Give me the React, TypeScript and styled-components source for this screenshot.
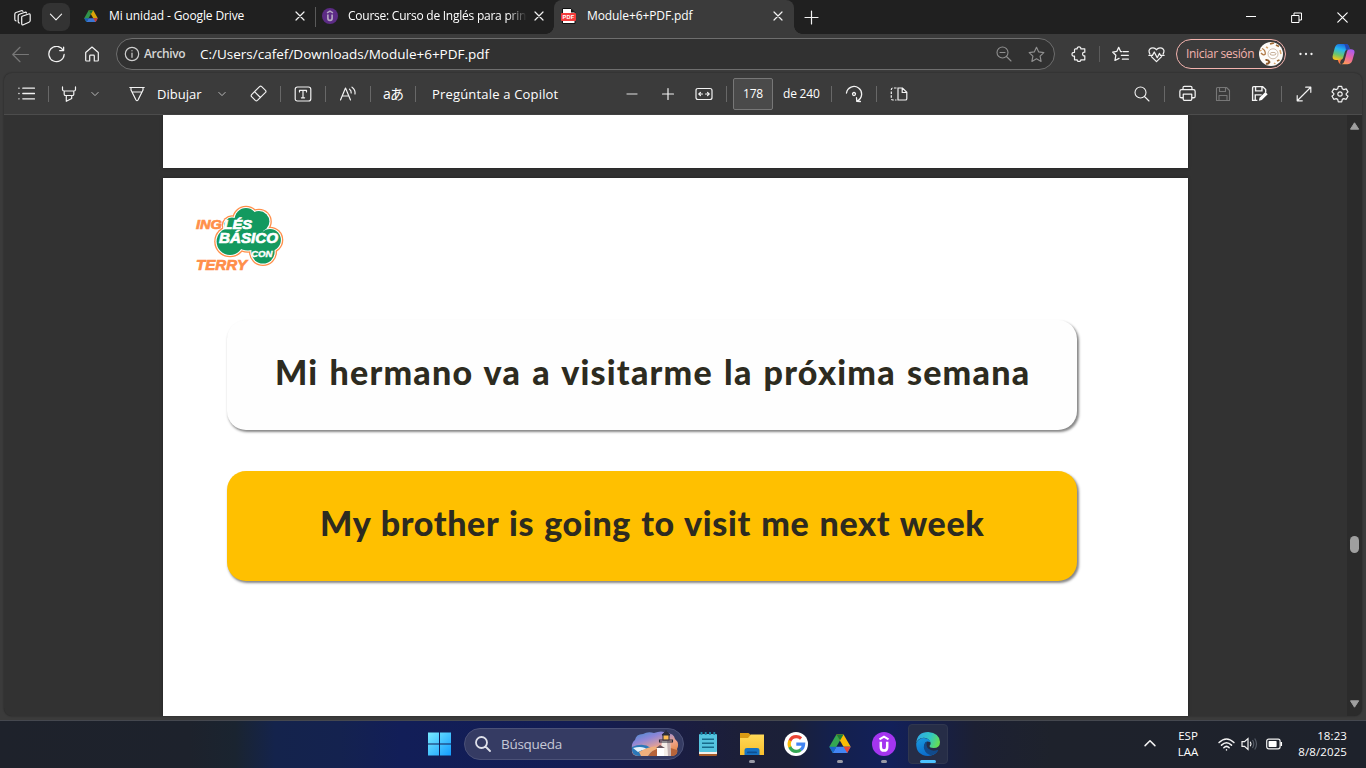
import React from "react";
import styled, { createGlobalStyle } from "styled-components";

const Global = createGlobalStyle`
  * { box-sizing: border-box; }
  html, body { margin: 0; padding: 0; overflow: hidden; }
  body { font-family: "Open Sans", "Noto Sans", "Noto Sans CJK JP", sans-serif; background: #3b3b3b; color: #fff; }
  svg { display: block; flex: none; }
`;

const Desktop = styled.div`
  width: 1366px;
  height: 768px;
  display: flex;
  flex-direction: column;
  background: #3b3b3b;
`;

const TabStrip = styled.div`
  height: 34px;
  background: #202020;
  display: flex;
  align-items: center;
  padding-left: 14px;
`;

const TabActions = styled.button`
  width: 28px;
  height: 28px;
  margin: 0 0 0 11px;
  padding: 0;
  border: 0;
  border-radius: 8px;
  background: #333;
  display: flex;
  align-items: center;
  justify-content: center;
`;

const Tab = styled.div<{ $width: number; $active?: boolean }>`
  position: relative;
  width: ${(p) => p.$width}px;
  height: 34px;
  flex: none;
  display: flex;
  align-items: center;
  padding-bottom: 2px;
  background: ${(p) => (p.$active ? "#3b3b3b" : "transparent")};
  border-radius: 8px 8px 0 0;
  ${(p) =>
    p.$active &&
    `&::before, &::after {
      content: "";
      position: absolute;
      bottom: 0;
      width: 8px;
      height: 8px;
    }
    &::before { left: -8px; background: radial-gradient(circle at 0 0, transparent 7.5px, #3b3b3b 8px); }
    &::after { right: -8px; background: radial-gradient(circle at 100% 0, transparent 7.5px, #3b3b3b 8px); }`}
`;

const Text = styled.span<{ $size?: number; $track?: number; $color?: string; $width?: number; $left?: number; $weight?: number; $fade?: boolean }>`
  flex: none;
  white-space: nowrap;
  font-size: ${(p) => p.$size ?? 13}px;
  line-height: 18px;
  letter-spacing: ${(p) => p.$track ?? 0}px;
  color: ${(p) => p.$color ?? "#fff"};
  width: ${(p) => (p.$width ? `${p.$width}px` : "auto")};
  margin-left: ${(p) => p.$left ?? 0}px;
  font-weight: ${(p) => p.$weight ?? 400};
  ${(p) => p.$fade && "-webkit-mask-image: linear-gradient(90deg, #000 calc(100% - 20px), transparent);"}
`;

const IconCell = styled.span<{ $left?: number; $size?: number }>`
  width: ${(p) => p.$size ?? 18}px;
  height: ${(p) => p.$size ?? 18}px;
  margin-left: ${(p) => p.$left ?? 0}px;
  flex: none;
  display: flex;
  align-items: center;
  justify-content: center;
`;

const Rule = styled.span<{ $left?: number; $height?: number; $color?: string }>`
  width: 1px;
  flex: none;
  height: ${(p) => p.$height ?? 16}px;
  margin-left: ${(p) => p.$left ?? 0}px;
  background: ${(p) => p.$color ?? "#686868"};
`;

const AddressRow = styled.div`
  height: 39px;
  display: flex;
  align-items: center;
  padding: 1px 0 0 11px;
`;

const Omnibox = styled.div`
  width: 939px;
  height: 32px;
  margin-left: 15px;
  flex: none;
  display: flex;
  align-items: center;
  padding-left: 7px;
  border: 1px solid #6e6e6e;
  border-radius: 16px;
  background: #313131;
`;

const Profile = styled.div`
  width: 110px;
  height: 30px;
  margin-left: 11px;
  flex: none;
  display: flex;
  align-items: center;
  padding-left: 9px;
  border: 1px solid #f3b3ae;
  border-radius: 15px;
`;

const Viewer = styled.div`
  width: 1358px;
  height: 643px;
  margin-left: 4px;
  flex: none;
  border-radius: 8px;
  overflow: hidden;
  display: flex;
  flex-direction: column;
  background: #323232;
  box-shadow: 0 0 2px rgba(0, 0, 0, 0.45);
`;

const PdfToolbar = styled.div`
  height: 42px;
  flex: none;
  display: flex;
  align-items: center;
  padding-left: 13px;
  background: #3b3b3b;
  border-bottom: 1px solid #4c4c4c;
`;

const PageInput = styled.div`
  width: 40px;
  height: 32px;
  margin-left: 6px;
  flex: none;
  display: flex;
  align-items: center;
  justify-content: center;
  border: 1px solid #777;
  border-radius: 2px;
  background: #4a4a4a;
`;

const Stage = styled.div`
  height: 601px;
  display: flex;
  justify-content: space-between;
  padding-left: 159px;
`;

const Pages = styled.div`
  width: 1025px;
  display: flex;
  flex-direction: column;
  gap: 10px;
`;

const PreviousPage = styled.div`
  height: 53px;
  flex: none;
  background: #fff;
  box-shadow: 0 0 3px rgba(0, 0, 0, 0.35);
`;

const Slide = styled.div`
  height: 538px;
  flex: none;
  background: #fff;
  padding: 22px 0 0 27px;
  box-shadow: 0 0 3px rgba(0, 0, 0, 0.35);
`;

const Phrase = styled.div<{ $bg: string; $top: number; $track: number; $word: number; $shift: number }>`
  width: 850px;
  height: 110px;
  margin: ${(p) => p.$top}px 0 0 37.4px;
  padding: 0 0 7px ${(p) => p.$shift}px;
  display: flex;
  align-items: center;
  border-radius: 19px;
  background: ${(p) => p.$bg};
  box-shadow: 1.5px 2px 2.5px rgba(0, 0, 0, 0.48);
  color: #2d2b20;
  font-family: Lato, "Open Sans", sans-serif;
  font-weight: 900;
  font-size: 34px;
  white-space: nowrap;
  letter-spacing: ${(p) => p.$track}px;
  word-spacing: ${(p) => p.$word}px;
`;

const Scrollbar = styled.div`
  width: 15px;
  display: flex;
  flex-direction: column;
  align-items: center;
  background: #2b2b2b;
  padding: 7px 0 8px;
`;

const Thumb = styled.div`
  width: 9px;
  height: 17px;
  margin-top: 406px;
  margin-bottom: auto;
  border-radius: 5px;
  background: #9f9f9f;
`;

const Taskbar = styled.div`
  height: 48px;
  margin-top: 4px;
  flex: none;
  display: flex;
  align-items: center;
  border-top: 1px solid #45484f;
  padding: 0 0 1px 427px;
  background: linear-gradient(90deg, #1e222b 0, #1d222c 190px, #1a2430 235px, #14234c 275px, #14224f 340px, #121e58 400px, #131d54 580px, #1a1d42 680px, #1c1f38 740px, #1b2038 790px, #14204c 830px, #12205a 890px, #151f4c 925px, #1c2033 975px, #1e222c 1050px, #1e222b 100%);
`;

const Search = styled.div`
  width: 220px;
  height: 32px;
  margin-left: 13px;
  flex: none;
  display: flex;
  align-items: center;
  padding-left: 10px;
  border: 1px solid #4b5177;
  border-radius: 16px;
  background: #353b63;
`;

const TaskButton = styled.div<{ $active?: boolean; $mark?: boolean }>`
  position: relative;
  width: 40px;
  height: 40px;
  margin-left: 4px;
  flex: none;
  display: flex;
  align-items: center;
  justify-content: center;
  border-radius: 4px;
  border: 1px solid ${(p) => (p.$active ? "#30374f" : "transparent")};
  background: ${(p) => (p.$active ? "#262d47" : "transparent")};
  &::after {
    content: "";
    display: ${(p) => (p.$mark ? "block" : "none")};
    position: absolute;
    bottom: 0;
    width: ${(p) => (p.$active ? 16 : 6)}px;
    height: 3px;
    border-radius: 2px;
    background: ${(p) => (p.$active ? "#4cc2ff" : "#989aa6")};
  }
`;

const Stack = styled.div<{ $left: number; $width: number; $align: string; $track?: number }>`
  display: flex;
  flex-direction: column;
  flex: none;
  margin-left: ${(p) => p.$left}px;
  width: ${(p) => p.$width}px;
  align-items: ${(p) => p.$align};
  font-size: 11.5px;
  line-height: 16px;
  letter-spacing: ${(p) => p.$track ?? 0}px;
  white-space: nowrap;
`;

type LineProps = { d: string; size?: number; box?: number; color?: string; stroke?: number; fill?: string };

const Line = ({ d, size = 16, box = 16, color = "#f2f2f2", stroke = 1.1, fill = "none" }: LineProps) => (
  <svg width={size} height={size} viewBox={`0 0 ${box} ${box}`} fill={fill} stroke={color} strokeWidth={stroke} strokeLinecap="round" strokeLinejoin="round">
    <path d={d} />
  </svg>
);

const CLOSE = "M1 1L9 9M9 1L1 9";
const CHEVRON = "M1 3L5 7L9 3";
const STAR = "M8 1.2L10.1 5.6L14.9 6.2L11.4 9.6L12.3 14.5L8 12.1L3.7 14.5L4.6 9.6L1.1 6.2L5.9 5.6Z";

const DriveIcon = ({ size, dim }: { size: number; dim?: boolean }) => (
  <svg width={size} height={size * 0.9} viewBox="0 0 22 20" opacity={dim ? 0.85 : 1}>
    <path d="M7.3 0.5L0.2 13L3.7 19.3L11 6.5Z" fill="#34a853" />
    <path d="M7.3 0.5H14.6L21.8 13H14.6Z" fill="#fbbc04" />
    <path d="M7.3 0.5H14.6L11 6.5Z" fill="#188038" />
    <path d="M7.3 13H21.8L18.3 19.3H3.7Z" fill="#4285f4" />
    <path d="M0.2 13H7.3L3.7 19.3Z" fill="#1967d2" />
    <path d="M14.6 13H21.8L18.3 19.3Z" fill="#ea4335" />
  </svg>
);

const UdemyIcon = ({ size, bg, fg }: { size: number; bg: string; fg: string }) => (
  <svg width={size} height={size} viewBox="0 0 24 24">
    <circle cx="12" cy="12" r="12" fill={bg} />
    <path d="M7.5 7.3L12 4.7L16.5 7.3" fill="none" stroke={fg} strokeWidth="2.1" />
    <path d="M8.8 9.8V14.9Q8.8 18.6 12 18.6Q15.2 18.6 15.2 14.9V9.8" fill="none" stroke={fg} strokeWidth="2.5" />
  </svg>
);

const PdfIcon = () => (
  <svg width="16" height="16" viewBox="0 0 16 16">
    <path d="M1.5 .5H10L14 4.5V15.5H1.5Z" fill="#fff" stroke="#111" />
    <path d="M10 .5V4.5H14" fill="#111" />
    <rect x="0" y="5" width="15" height="8" rx="1" fill="#f43b3b" />
    <text x="1.6" y="11.1" fontFamily="Liberation Sans" fontWeight="700" fontSize="5.6" fill="#fff" textLength="11.6">PDF</text>
  </svg>
);

const CopilotIcon = () => (
  <svg width="23" height="22" viewBox="0 0 23 22">
    <defs>
      <linearGradient id="cpA" x1="0.6" y1="0" x2="0.3" y2="1">
        <stop offset="0" stopColor="#1b68dc" /><stop offset="0.35" stopColor="#25b7f2" /><stop offset="0.7" stopColor="#6cc66b" /><stop offset="1" stopColor="#f4c51c" />
      </linearGradient>
      <linearGradient id="cpB" x1="0.7" y1="0" x2="0.3" y2="1">
        <stop offset="0" stopColor="#a65bf3" /><stop offset="0.5" stopColor="#e963a4" /><stop offset="1" stopColor="#ff9b56" />
      </linearGradient>
    </defs>
    <path d="M16.5 6.2H19Q23.4 6.2 22.3 10.5L20.3 17.5Q19 21.3 15.3 21.3H9.7Q11.8 20.8 12.6 17.6L14.7 9.5Q15.3 6.9 16.5 6.2Z" fill="url(#cpB)" />
    <path d="M7 1H14.3Q16.3 1 17 3.6L17.7 6.2H16.6Q13.7 6.2 12.8 9L11 15.2Q10.2 17 7.8 16.9H4Q-.3 16.9 .8 12.3L2.8 4.8Q3.9 1 7 1Z" fill="url(#cpA)" />
    <path d="M6.8 16.9Q8.8 16.8 9.6 15L8.1 19.5Q7.7 21.3 9.7 21.3Q7.1 21.3 6.2 18.2L5.8 16.9Z" fill="#fb7b45" />
    <path d="M12 1H14.3Q16.3 1 17 3.6L17.7 6.2H16.6Q15 6.2 14 7.2L13.4 4Q13 1.7 12 1Z" fill="#2348b5" />
  </svg>
);

const Avatar = () => (
  <svg width="24" height="24" viewBox="0 0 24 24">
    <defs><clipPath id="av"><circle cx="12" cy="12" r="12" /></clipPath></defs>
    <g clipPath="url(#av)">
      <rect width="24" height="24" fill="#fdfbf8" />
      <g fill="none" stroke="#b07a48" strokeWidth="1.3">
        <path d="M3 6.5Q6.5 8 6.3 12Q4.5 14 2 11" /><path d="M6.5 18Q9.5 17.5 10.5 20Q9 22.5 7 21.5" stroke="#8e5a2c" strokeWidth="2" />
        <path d="M11 2L15 0.8M17 3L20 4.5M18 19L20.5 18" stroke="#a06a35" strokeWidth="1.8" />
        <path d="M7 5L9 6M1 9L2.5 8M15 21L16.5 22M21 8L22 12" stroke="#d9a56c" strokeWidth="1.5" />
      </g>
      <circle cx="14" cy="11.8" r="5" fill="#fff" stroke="#cdbbaa" strokeWidth="1" />
      <ellipse cx="14" cy="11.8" rx="3" ry="1.4" fill="none" stroke="#b99c80" strokeWidth=".8" />
    </g>
  </svg>
);

const Clover = ({ grow, fill }: { grow: number; fill: string }) => (
  <g fill={fill}>
    <circle cx="246" cy="219.5" r={11 + grow} />
    <circle cx="259" cy="221.5" r={10 + grow} />
    <circle cx="230" cy="241.5" r={13 + grow} />
    <circle cx="232" cy="225.5" r={7.5 + grow} />
    <circle cx="270" cy="240" r={10.5 + grow} />
    <circle cx="263" cy="252" r={11.2 + grow} />
    <circle cx="248" cy="235" r={15 + grow} />
  </g>
);

const BrandLogo = () => (
  <svg width="96" height="76" viewBox="190 200 96 76">
    <Clover grow={2.8} fill="#ff8f4a" />
    <Clover grow={1.5} fill="#fff" />
    <Clover grow={0.4} fill="#13995f" />
    <g fontFamily="Liberation Sans" fontStyle="italic" fontWeight="700" strokeWidth=".7">
      <text x="196" y="228.7" fontSize="13.5" fill="#ff8f4a" stroke="#ff8f4a" textLength="26" lengthAdjust="spacingAndGlyphs">ING</text>
      <text x="223.5" y="228.7" fontSize="13.5" fill="#fff" stroke="#fff" textLength="28.5" lengthAdjust="spacingAndGlyphs">LÉS</text>
      <text x="219" y="243.3" fontSize="14.3" fill="#fff" stroke="#fff" textLength="59" lengthAdjust="spacingAndGlyphs">BÁSICO</text>
      <text x="251" y="257.3" fontSize="9.6" fill="#fff" stroke="#fff" strokeWidth=".4" textLength="21.5" lengthAdjust="spacingAndGlyphs">CON</text>
      <text x="196" y="270" fontSize="14" fill="#ff8f4a" stroke="#ff8f4a" textLength="51" lengthAdjust="spacingAndGlyphs">TERRY</text>
    </g>
  </svg>
);

const Lighthouse = () => (
  <svg width="48" height="28" viewBox="0 0 48 28">
    <defs>
      <linearGradient id="sky" x1="0" y1="0" x2="0.7" y2="1">
        <stop offset="0" stopColor="#3a8ed0" /><stop offset=".35" stopColor="#8f86d8" /><stop offset=".7" stopColor="#f0a58c" /><stop offset="1" stopColor="#e88842" />
      </linearGradient>
    </defs>
    <path d="M4 10Q5 4 12 4Q17 1 23 3Q31 0 35 3Q43 3 44 9Q49 13 46 19Q48 25 40 26H8Q0 26 1 19Q0 13 4 10Z" fill="url(#sky)" />
    <path d="M1 17Q12 12 20 18Q25 22 21 26H8Q0 26 1 17Z" fill="#2c78b8" />
    <path d="M2 18Q12 15 17 20Q12 19 7 22Z" fill="#e6f3fb" />
    <path d="M17 26Q22 18 33 16L46 20Q47 26 40 26Z" fill="#b7643a" />
    <path d="M8 22Q20 15 31 17Q20 20 17 26H10Z" fill="#f0b07d" />
    <g transform="translate(-2 0)">
      <path d="M33 11H41L42 26H31Z" fill="#f5efe9" /><path d="M38 11H41L42 26H39Z" fill="#c4b3b4" />
      <rect x="28" y="18" width="7" height="8" fill="#fff" /><path d="M27 18L31 15L36 18Z" fill="#68545d" />
      <path d="M30 12H44M30.5 9.5V12M43.5 9.5V12M30 10H44" stroke="#2b2c3b" strokeWidth="1.1" />
      <rect x="34" y="4.5" width="6" height="5.5" fill="#ffbd52" stroke="#2b2c3b" /><path d="M33 5Q37 -1 41 5ZM37 2V0" fill="#2b2c3b" stroke="#2b2c3b" />
    </g>
  </svg>
);

const EdgeIcon = () => (
  <svg width="24" height="24" viewBox="0 0 24 24">
    <defs>
      <linearGradient id="eTop" x1="0" y1=".3" x2="1" y2=".6"><stop offset="0" stopColor="#2fa9e8" /><stop offset=".55" stopColor="#31c7c3" /><stop offset="1" stopColor="#68e04d" /></linearGradient>
      <linearGradient id="eLow" x1="0" y1="0" x2=".4" y2="1"><stop offset="0" stopColor="#199be0" /><stop offset="1" stopColor="#0b6ccc" /></linearGradient>
    </defs>
    <path d="M.2 11Q1.2 0 12.2 0Q23.4 .8 24 10Q24 16 17.5 16Q13.3 16 13.6 13.8Q15.6 11.7 13.8 9Q10.5 4.7 4.8 6.3Q1.5 7.5 .2 11Z" fill="url(#eTop)" />
    <path d="M.2 11.5Q2.4 6 8 6Q13.5 6.5 14.4 10.2Q9.2 7.6 8.2 13.4Q8 19 14.8 20.5Q18.8 20.8 22 18.6Q18.8 24 12 24Q0 23.2 .2 11.5Z" fill="url(#eLow)" />
    <path d="M9.8 10Q6 14.8 9.4 19.7Q12 23.1 16.4 23.1Q20 22 22.2 18.3Q22.7 17.2 21.3 17.9Q16.3 20 12.2 16.6Q9.7 14.2 11 10.1Z" fill="#114a8b" />
  </svg>
);

const GoogleIcon = () => (
  <svg width="24" height="24" viewBox="0 0 24 24">
    <circle cx="12" cy="12" r="12" fill="#fff" />
    <g fill="none" strokeWidth="3.2">
      <path d="M5.8 9Q7.6 4.6 12.2 4.6Q15 4.6 17.1 6.5" stroke="#ea4335" />
      <path d="M6 8.6Q4.3 12 6 15.4" stroke="#fbbc04" />
      <path d="M5.8 15Q7.8 19.4 12.2 19.4Q14.9 19.4 16.9 17.6" stroke="#34a853" />
      <path d="M12.3 12.2H19.6Q19.4 15.8 16.7 17.8" stroke="#4285f4" />
    </g>
  </svg>
);

const NotepadIcon = () => (
  <svg width="18" height="24" viewBox="0 0 18 24">
    <rect y="20" width="18" height="4" rx="1" fill="#a65b28" /><rect y="18" width="18" height="4" fill="#f3eee8" />
    <rect y="2" width="18" height="18" rx="1" fill="#55c4df" />
    <path d="M2.5 0V3M6.7 0V3M11 0V3M15.3 0V3" stroke="#1c88a8" strokeWidth="1.8" />
    <path d="M3 7.3H15M3 11.3H15M3 15.3H15" stroke="#176b8b" strokeWidth="1.6" />
  </svg>
);

const FolderIcon = () => (
  <svg width="24" height="22" viewBox="0 0 24 22">
    <defs><linearGradient id="fo" x1="0" y1="0" x2="0" y2="1"><stop offset="0" stopColor="#ffd958" /><stop offset="1" stopColor="#f9bf2d" /></linearGradient></defs>
    <path d="M0 0H8.5L11 2V8H0Z" fill="#d99a13" /><path d="M0 5H8L11 1.5H24V22H0Z" fill="url(#fo)" />
    <path d="M4.5 22V17Q4.5 15 7 15H17Q19.5 15 19.5 17V22Z" fill="#1673c4" /><rect x="7" y="18.5" width="10" height="1.8" rx=".9" fill="#0d4f92" />
  </svg>
);

const SaveGlyph = "M2.5 1.5H11.5L14.5 4.5V14.5H1.5V2.5Q1.5 1.5 2.5 1.5ZM4.5 1.5V5.5H10.5V1.5M4 14.5V9.5H12V14.5";

export default function App() {
  return (
    <Desktop>
      <Global />
      <TabStrip>
        <IconCell $size={17}>
          <svg width="17" height="17" viewBox="0 0 17 17" fill="none" stroke="#f2f2f2" strokeWidth="1.2" strokeLinejoin="round" strokeLinecap="round">
            <path d="M8.2 7.2L14.6 5Q16.2 4.6 16.2 6.2V11.5Q16.2 12.7 15 13.2L9.3 15.7Q7.7 16.3 7.7 14.6V8.2Q7.7 7.4 8.2 7.2Z" />
            <path d="M5.5 14Q4.2 14 4.2 12.4V6.8Q4.2 5.6 5.4 5.2L11 3.3Q12.2 3 12.5 4" />
            <path d="M2 11.9Q.8 11.7.8 10.3V5.2Q.8 3.9 2 3.5L7.3 1.7Q8.6 1.3 8.9 2.4" />
          </svg>
        </IconCell>
        <TabActions><Line d={CHEVRON} size={14} box={10} stroke={0.8} /></TabActions>
        <Tab $width={245}>
          <IconCell $left={13} $size={16}><DriveIcon size={14} dim /></IconCell>
          <Text $size={12} $left={10} $width={186} $track={-0.12}>Mi unidad - Google Drive</Text>
          <Line d={CLOSE} box={10} size={10} stroke={1.2} />
        </Tab>
        <Rule $height={20} $color="#5a5a5a" />
        <Tab $width={238}>
          <IconCell $left={6} $size={16}><UdemyIcon size={16} bg="#5c2b85" fg="#b4a6c2" /></IconCell>
          <Text $size={12} $left={10} $width={179} $fade $track={-0.24}>Course: Curso de Inglés para princ</Text>
          <IconCell $left={7} $size={10}><Line d={CLOSE} box={10} size={10} stroke={1.2} /></IconCell>
        </Tab>
        <Tab $width={240} $active>
          <IconCell $left={7} $size={16}><PdfIcon /></IconCell>
          <Text $size={12} $left={10} $width={186} $track={-0.1}>Module+6+PDF.pdf</Text>
          <Line d={CLOSE} box={10} size={10} stroke={1.2} />
        </Tab>
        <IconCell $left={10} $size={15}><Line d="M7.5 1V14M1 7.5H14" box={15} size={15} stroke={1.2} /></IconCell>
        <IconCell $left={427} $size={10}><Line d="M0 4.5H10" box={10} size={10} stroke={1} color="#fff" /></IconCell>
        <IconCell $left={35} $size={11}><Line d="M1 3.5H8V10.5H1ZM3 3.3V1H10.5V8H8.2" box={11} size={11} stroke={1} color="#fff" /></IconCell>
        <IconCell $left={35} $size={11}><Line d="M.8 .8L10.2 10.2M10.2 .8L.8 10.2" box={11} size={11} stroke={1.2} color="#fff" /></IconCell>
      </TabStrip>

      <AddressRow>
        <IconCell><Line d="M15.5 8H.7M7.5 1.2L.7 8L7.5 14.8" size={17} color="#777" /></IconCell>
        <IconCell $left={18}><Line d="M14.7 4.2V1M14.7 4.3H11M14.4 4.2A7.2 7.2 0 1 0 15.2 8" size={17} stroke={1.2} /></IconCell>
        <IconCell $left={18}><Line d="M1.7 6.5L8 1L14.3 6.5V14.2Q14.3 15 13.5 15H10.3V10Q10.3 9.2 9.5 9.2H6.5Q5.7 9.2 5.7 10V15H2.5Q1.7 15 1.7 14.2Z" stroke={1.2} /></IconCell>
        <Omnibox>
          <IconCell $size={16}><Line d="M8 1.3A6.7 6.7 0 1 0 8 14.7A6.7 6.7 0 1 0 8 1.3M8 7V11.3M8 4.7V4.8" color="#cfcfcf" stroke={1.2} /></IconCell>
          <Text $size={12} $left={4} $width={56} $color="#d6d6d6" $weight={600} $track={-0.35}>Archivo</Text>
          <Text $size={13.5} $width={795}>C:/Users/cafef/Downloads/Module+6+PDF.pdf</Text>
          <IconCell><Line d="M6.5 1A5.5 5.5 0 1 0 6.5 12A5.5 5.5 0 1 0 6.5 1M10.5 10.5L15 15M4 6.5H9" color="#8f8f8f" /></IconCell>
          <IconCell $left={14}><Line d={STAR} size={17} color="#8f8f8f" /></IconCell>
        </Omnibox>
        <IconCell $left={15}><Line stroke={1.2} d="M4.5 2.8H6.2Q6 .8 8 .8Q10 .8 9.8 2.8H13.8V6.2Q11.6 6 11.6 8Q11.6 10 13.8 9.8V13.8H9.8Q10 15.4 8 15.4Q6 15.4 6.2 13.8H3.5V10.1Q1 10.3 1 8.2Q1 6.1 3.5 6.3V3.8Q3.5 2.8 4.5 2.8Z" /></IconCell>
        <Rule $left={11} $color="#5b5b5b" />
        <IconCell $left={11}><Line size={17} stroke={1.2} d="M9.2 5.2H8.1L6.3 1.3L4.6 5L.6 5.7L3.6 8.7L2.8 13.6L6.6 11.6M10.5 5.2H15.4M8.8 8.8H15.4M9.8 12.4H15.4" /></IconCell>
        <IconCell $left={18}><Line size={17} stroke={1.2} d="M1.7 7.4Q-.3 3.6 3 2Q6 .9 8 3.5Q10 .9 13 2Q16.3 3.6 14.3 7.4M3.2 10L8 14.7L12.8 10M.8 8.8H4.2L5.9 5.6L8.7 11L10.7 7L11.8 8.8H15.2" /></IconCell>
        <Profile>
          <Text $size={12} $width={73} $color="#f3b3ae" $track={-0.34}>Iniciar sesión</Text>
          <Avatar />
        </Profile>
        <IconCell $left={11}><Line d="M2.5 8V8.01M8 8V8.01M13.5 8V8.01" stroke={2.3} /></IconCell>
        <IconCell $left={17} $size={23}><CopilotIcon /></IconCell>
      </AddressRow>

      <Viewer>
        <PdfToolbar>
          <IconCell><Line size={17} d="M4.5 3H15.5M4.5 8H15.5M4.5 13H15.5M.8 3H1M.8 8H1M.8 13H1" stroke={1.2} /></IconCell>
          <Rule $left={13} />
          <IconCell $left={11}><Line d="M1.5 .8V3.5Q1.5 5 3 5H13Q14.5 5 14.5 3.5V.8M3.2 5V8.2Q3.2 9.5 4.5 9.5H11.5Q12.8 9.5 12.8 8.2V5M5.3 9.5V15.3L10.7 12.5V9.5" stroke={1.2} /></IconCell>
          <IconCell $left={12} $size={10}><Line d={CHEVRON} box={10} size={8} color="#c8c8c8" /></IconCell>
          <IconCell $left={28}><Line d="M.8 1.5H15.2M2 1.7V4L7 14Q8 15.5 9 14L14 4V1.7M3.2 6H12.8" stroke={1.2} /></IconCell>
          <Text $left={11} $width={60} $track={0.02}>Dibujar</Text>
          <IconCell $size={10}><Line d={CHEVRON} box={10} size={8} color="#c8c8c8" /></IconCell>
          <IconCell $left={22}><Line size={17} d="M1.5 9L9 1.5Q10 .6 11 1.5L14.6 5Q15.5 6 14.6 7L7 14.5Q6 15.4 5 14.5L1.5 11Q.7 10 1.5 9ZM4.2 6.3L9.8 11.8" /></IconCell>
          <Rule $left={13} />
          <IconCell $left={13}><Line size={18} box={18} stroke={1.2} d="M3.5 2H14.5Q16.8 2 16.8 4.3V13.7Q16.8 16 14.5 16H3.5Q1.2 16 1.2 13.7V4.3Q1.2 2 3.5 2ZM5.5 7V5.3H12.5V7M9 5.3V12.8M7.4 12.8H10.6" /></IconCell>
          <Rule $left={13} />
          <IconCell $left={13}><Line size={18} box={18} d="M1.5 15L6.5 3L11.5 15M3.2 11H9.8M10.5 4.2Q12.4 5.5 12.2 8M13 2.2Q16.6 4.6 16 9" stroke={1.2} /></IconCell>
          <Rule $left={13} />
          <IconCell $left={13}><Text $size={14} $track={-0.9}>aあ</Text></IconCell>
          <Rule $left={13} />
          <Text $left={16} $width={191} $track={0.18}>Pregúntale a Copilot</Text>
          <IconCell><Line d="M3 8H13" stroke={1.3} color="#aaa" /></IconCell>
          <IconCell $left={18}><Line d="M8 2.5V13.5M2.5 8H13.5" stroke={1.2} /></IconCell>
          <IconCell $left={18}><Line size={18} box={18} stroke={1.2} d="M3 3.5H15Q17 3.5 17 5.5V12.5Q17 14.5 15 14.5H3Q1 14.5 1 12.5V5.5Q1 3.5 3 3.5ZM3.8 9H7.5M14.2 9H10.5M5.5 7.3L3.8 9L5.5 10.7M12.5 7.3L14.2 9L12.5 10.7" /></IconCell>
          <Rule $left={13} />
          <PageInput><Text $size={12} $track={-0.2}>178</Text></PageInput>
          <Text $size={12} $left={10} $width={48} $track={-0.2}>de 240</Text>
          <Rule />
          <IconCell $left={13}><Line size={18} box={18} stroke={1.3} d="M1.5 8A7.6 7.6 0 1 1 12.2 16M11.5 12.7L11.8 16.4L15.4 16.5M9 7.5A1.5 1.5 0 1 0 9 10.5A1.5 1.5 0 1 0 9 7.5" /></IconCell>
          <Rule $left={13} />
          <IconCell $left={13}><svg width="18" height="18" viewBox="0 0 18 18" fill="none" stroke="#f2f2f2" strokeWidth="1.2"><path d="M6.5 3H3Q1.3 3 1.3 4.7V13.3Q1.3 15 3 15H6.5" strokeDasharray="2.5 1.3" /><path d="M8 3H12.5L16.8 7.3V13.7Q16.8 15 15.4 15H8ZM12.2 3V7.5H16.8" /></svg></IconCell>
          <IconCell $left={225}><Line d="M6.5 1A5.5 5.5 0 1 0 6.5 12A5.5 5.5 0 1 0 6.5 1M10.5 10.5L15 15" /></IconCell>
          <Rule $left={13} />
          <IconCell $left={13}><Line size={17} stroke={1.2} d="M3.8 4V2.5Q3.8 1.2 5 1.2H11Q12.2 1.2 12.2 2.5V4M3.8 12H2.3Q.8 12 .8 10.5V6Q.8 4.3 2.5 4.3H13.5Q15.2 4.3 15.2 6V10.5Q15.2 12 13.7 12H12.2M4 8.5H12V13.5Q12 14.5 11 14.5H5Q4 14.5 4 13.5Z" /></IconCell>
          <IconCell $left={18}><Line d={SaveGlyph} color="#777" /></IconCell>
          <IconCell $left={18}><svg width="17" height="17" viewBox="0 0 16 16" fill="none" stroke="#f4f4f4" strokeWidth="1.3"><path d="M6 14.5H1.5V2.5Q1.5 1.5 2.5 1.5H11L13.8 4.3V7M4.3 1.5V5.5H10.3V1.5M4 14.5V9.3H10" /><path d="M7.4 14.8L8 12L13.5 6.7L15.7 8.8L10.2 14.2Z" fill="#fff" stroke="none" /></svg></IconCell>
          <Rule $left={13} />
          <IconCell $left={13}><Line d="M9.7 1.2H14.8V6.3M14.5 1.5L1.5 14.5M1.2 9.7V14.8H6.3" stroke={1.2} /></IconCell>
          <IconCell $left={18}><Line size={18} box={18} stroke={1.2} d="M7.3 1.3H10.7L11.3 3.8L12.8 4.6L15.2 3.9L17 6.9L15.2 8.6V9.8L17 11.3L15.2 14.3L12.8 13.6L11.3 14.4L10.7 16.8H7.3L6.7 14.4L5.2 13.6L2.8 14.3L1 11.3L2.8 9.6V8.5L1 6.9L2.8 3.9L5.2 4.6L6.7 3.8ZM9 6.8A2.2 2.2 0 1 0 9 11.2A2.2 2.2 0 1 0 9 6.8" /></IconCell>
        </PdfToolbar>
        <Stage>
          <Pages>
            <PreviousPage />
            <Slide>
              <BrandLogo />
              <Phrase $bg="#fefefe" $top={44.4} $track={1.22} $word={1.8} $shift={47.6}>Mi hermano va a visitarme la próxima semana</Phrase>
              <Phrase $bg="#ffc000" $top={41} $track={0.65} $word={1.4} $shift={92.6}>My brother is going to visit me next week</Phrase>
            </Slide>
          </Pages>
          <Scrollbar>
            <svg width="10" height="8" viewBox="0 0 10 8"><path d="M4.5 .8L8.7 7.2H.5Z" fill="#9f9f9f" stroke="#9f9f9f" strokeLinejoin="round" /></svg>
            <Thumb />
            <svg width="10" height="8" viewBox="0 0 10 8"><path d="M4.5 7.2L8.7 .8H.5Z" fill="#9f9f9f" stroke="#9f9f9f" strokeLinejoin="round" /></svg>
          </Scrollbar>
        </Stage>
      </Viewer>

      <Taskbar>
        <svg width="24" height="24" viewBox="0 0 24 24">
          <defs><linearGradient id="win" x1="0" y1="0" x2="1" y2="1"><stop offset="0" stopColor="#78eaff" /><stop offset="1" stopColor="#139cff" /></linearGradient></defs>
          <path d="M1 .5H12V11.5H1ZM13 .5H24V11.5H13ZM1 12.5H12V23.5H1ZM13 12.5H24V23.5H13Z" fill="url(#win)" />
        </svg>
        <Search>
          <Line d="M6.5 1A5.5 5.5 0 1 0 6.5 12A5.5 5.5 0 1 0 6.5 1M10.5 10.5L15 15" stroke={1.8} color="#dfe1ea" />
          <Text $size={13.5} $left={10} $width={130} $color="#c6c8d6" $track={-0.3}>Búsqueda</Text>
          <Lighthouse />
        </Search>
        <TaskButton><NotepadIcon /></TaskButton>
        <TaskButton $mark><FolderIcon /></TaskButton>
        <TaskButton><GoogleIcon /></TaskButton>
        <TaskButton $mark><DriveIcon size={22} /></TaskButton>
        <TaskButton $mark><UdemyIcon size={24} bg="#a435f0" fg="#fff" /></TaskButton>
        <TaskButton $mark $active><EdgeIcon /></TaskButton>
        <IconCell $left={193}><Line d="M1 7L5.5 2.5L10 7" box={11} size={12} stroke={1.4} /></IconCell>
        <Stack $left={14} $width={30} $align="center"><span>ESP</span><span>LAA</span></Stack>
        <IconCell $left={14}><Line size={17} stroke={1.4} d="M1 6.2Q8 -.6 15 6.2M3.3 8.6Q8 4 12.7 8.6M5.5 11Q8 8.5 10.5 11M8 13V13.2" /></IconCell>
        <IconCell $left={5}><svg width="17" height="16" viewBox="0 0 17 16" fill="none" stroke="#f2f2f2" strokeWidth="1.2"><path d="M1 5.7H3.5L7 2.5V13.5L3.5 10.3H1Z" /><path d="M9.3 5.7Q10.7 8 9.3 10.3" /><path d="M11.5 4Q14 8 11.5 12M13.7 2.5Q17.3 8 13.7 13.5" stroke="#555b66" /></svg></IconCell>
        <IconCell $left={7}><svg width="17" height="12" viewBox="0 0 17 12"><rect x=".7" y="1.2" width="13.4" height="9.6" rx="2" fill="none" stroke="#f2f2f2" strokeWidth="1.2" /><rect x="2.6" y="3.1" width="8" height="5.8" rx=".6" fill="#fff" /><path d="M15.3 4V8" stroke="#fff" strokeWidth="1.5" /></svg></IconCell>
        <Stack $left={10} $width={54} $align="flex-end" $track={0.1}><span>18:23</span><span>8/8/2025</span></Stack>
      </Taskbar>
    </Desktop>
  );
}
